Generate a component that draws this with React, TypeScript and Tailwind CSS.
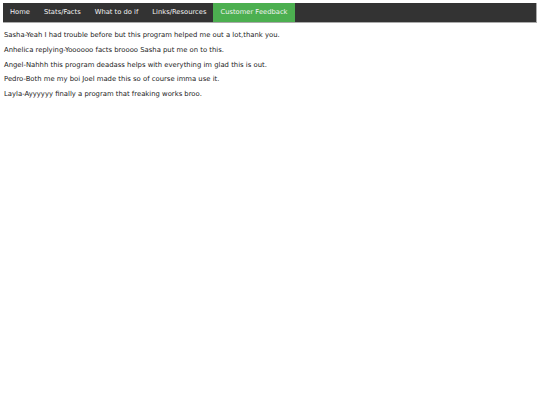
import React from "react";

const items = ["Home", "Stats/Facts", "What to do if", "Links/Resources", "Customer Feedback"];
const lines = [
  "Sasha-Yeah I had trouble before but this program helped me out a lot,thank you.",
  "Anhelica replying-Yoooooo facts broooo Sasha put me on to this.",
  "Angel-Nahhh this program deadass helps with everything im glad this is out.",
  "Pedro-Both me my boi Joel made this so of course imma use it.",
  "Layla-Ayyyyyy finally a program that freaking works broo.",
];

export default function App() {
  return (
    <div className="bg-white w-[540px] h-[405px] pt-[3px] px-[3px]" style={{ fontFamily: '"DejaVu Sans", Verdana, sans-serif' }}>
      <ul className="flex bg-[#333333] h-[20px] border-r border-b border-[#aaa]">
        {items.map((t, i) => (
          <li
            key={t}
            className={`flex items-center px-[7px] text-[6.75px] text-[#f2f2f2] ${i === 4 ? "bg-[#4CAF50]" : ""}`}
          >
            {t}
          </li>
        ))}
      </ul>
      <div className="pt-[8px] pl-[1px] text-[6.85px] text-[#222]">
        {lines.map((l) => (
          <p key={l} className="leading-[9px] mb-[5.75px]">{l}</p>
        ))}
      </div>
    </div>
  );
}
